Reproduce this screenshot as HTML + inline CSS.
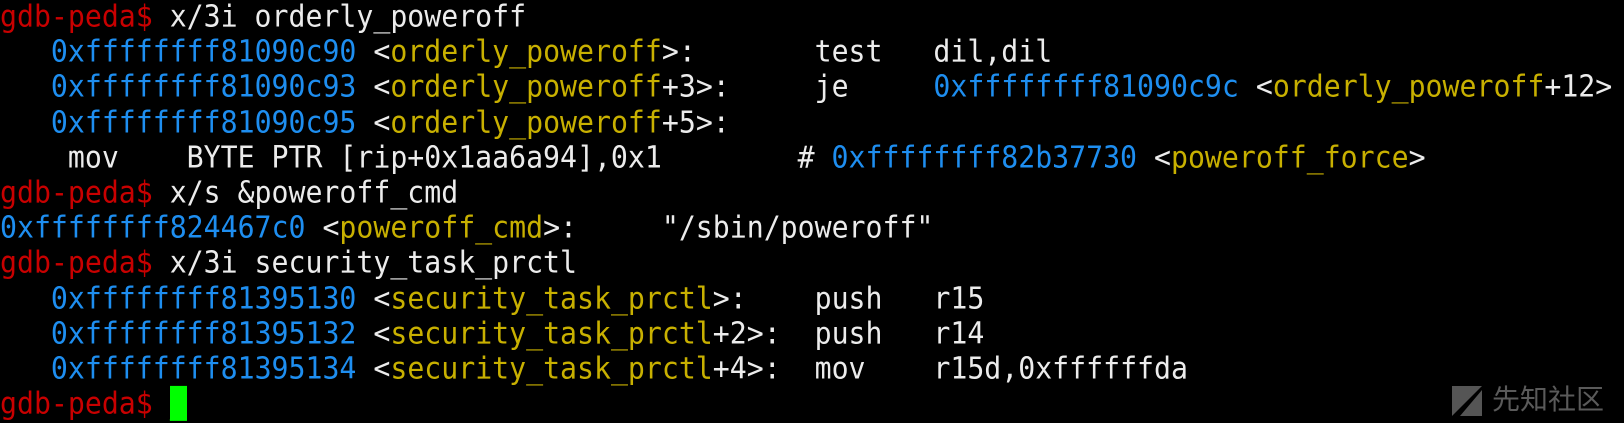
<!DOCTYPE html>
<html><head><meta charset="utf-8"><style>
html,body{margin:0;padding:0;background:#000;width:1624px;height:423px;overflow:hidden}
pre{margin:0;position:absolute;left:0;top:-1px;font-family:"DejaVu Sans Mono","Liberation Mono",monospace;font-size:28.2px;line-height:33.2px;color:#ececec;transform:scaleY(1.06);transform-origin:0 0}
.r{color:#c80000}.b{color:#1e8ef0}.y{color:#c8b000}
.cur{background:#00ff00;color:#00ff00}
.wm{position:absolute;left:1492px;top:383px;font-family:"Noto Sans CJK SC",sans-serif;font-size:28px;color:#5a5a5a;line-height:30px}
.logo{position:absolute;left:1452px;top:384px;width:30px;height:32px}
</style></head><body>
<pre><span class="r">gdb-peda$ </span>x/3i orderly_poweroff
   <span class="b">0xffffffff81090c90</span> &lt;<span class="y">orderly_poweroff</span>&gt;:       test   dil,dil
   <span class="b">0xffffffff81090c93</span> &lt;<span class="y">orderly_poweroff</span>+3&gt;:     je     <span class="b">0xffffffff81090c9c</span> &lt;<span class="y">orderly_poweroff</span>+12&gt;
   <span class="b">0xffffffff81090c95</span> &lt;<span class="y">orderly_poweroff</span>+5&gt;:
    mov    BYTE PTR [rip+0x1aa6a94],0x1        # <span class="b">0xffffffff82b37730</span> &lt;<span class="y">poweroff_force</span>&gt;
<span class="r">gdb-peda$ </span>x/s &amp;poweroff_cmd
<span class="b">0xffffffff824467c0</span> &lt;<span class="y">poweroff_cmd</span>&gt;:     "/sbin/poweroff"
<span class="r">gdb-peda$ </span>x/3i security_task_prctl
   <span class="b">0xffffffff81395130</span> &lt;<span class="y">security_task_prctl</span>&gt;:    push   r15
   <span class="b">0xffffffff81395132</span> &lt;<span class="y">security_task_prctl</span>+2&gt;:  push   r14
   <span class="b">0xffffffff81395134</span> &lt;<span class="y">security_task_prctl</span>+4&gt;:  mov    r15d,0xffffffda
<span class="r">gdb-peda$ </span><span class="cur">_</span></pre>
<svg class="logo" viewBox="0 0 30 32"><polygon points="0,2 30,2 0,32" fill="#555"/><polygon points="30,6 30,32 8,32" fill="#555"/></svg>
<div class="wm">先知社区</div>
</body></html>
